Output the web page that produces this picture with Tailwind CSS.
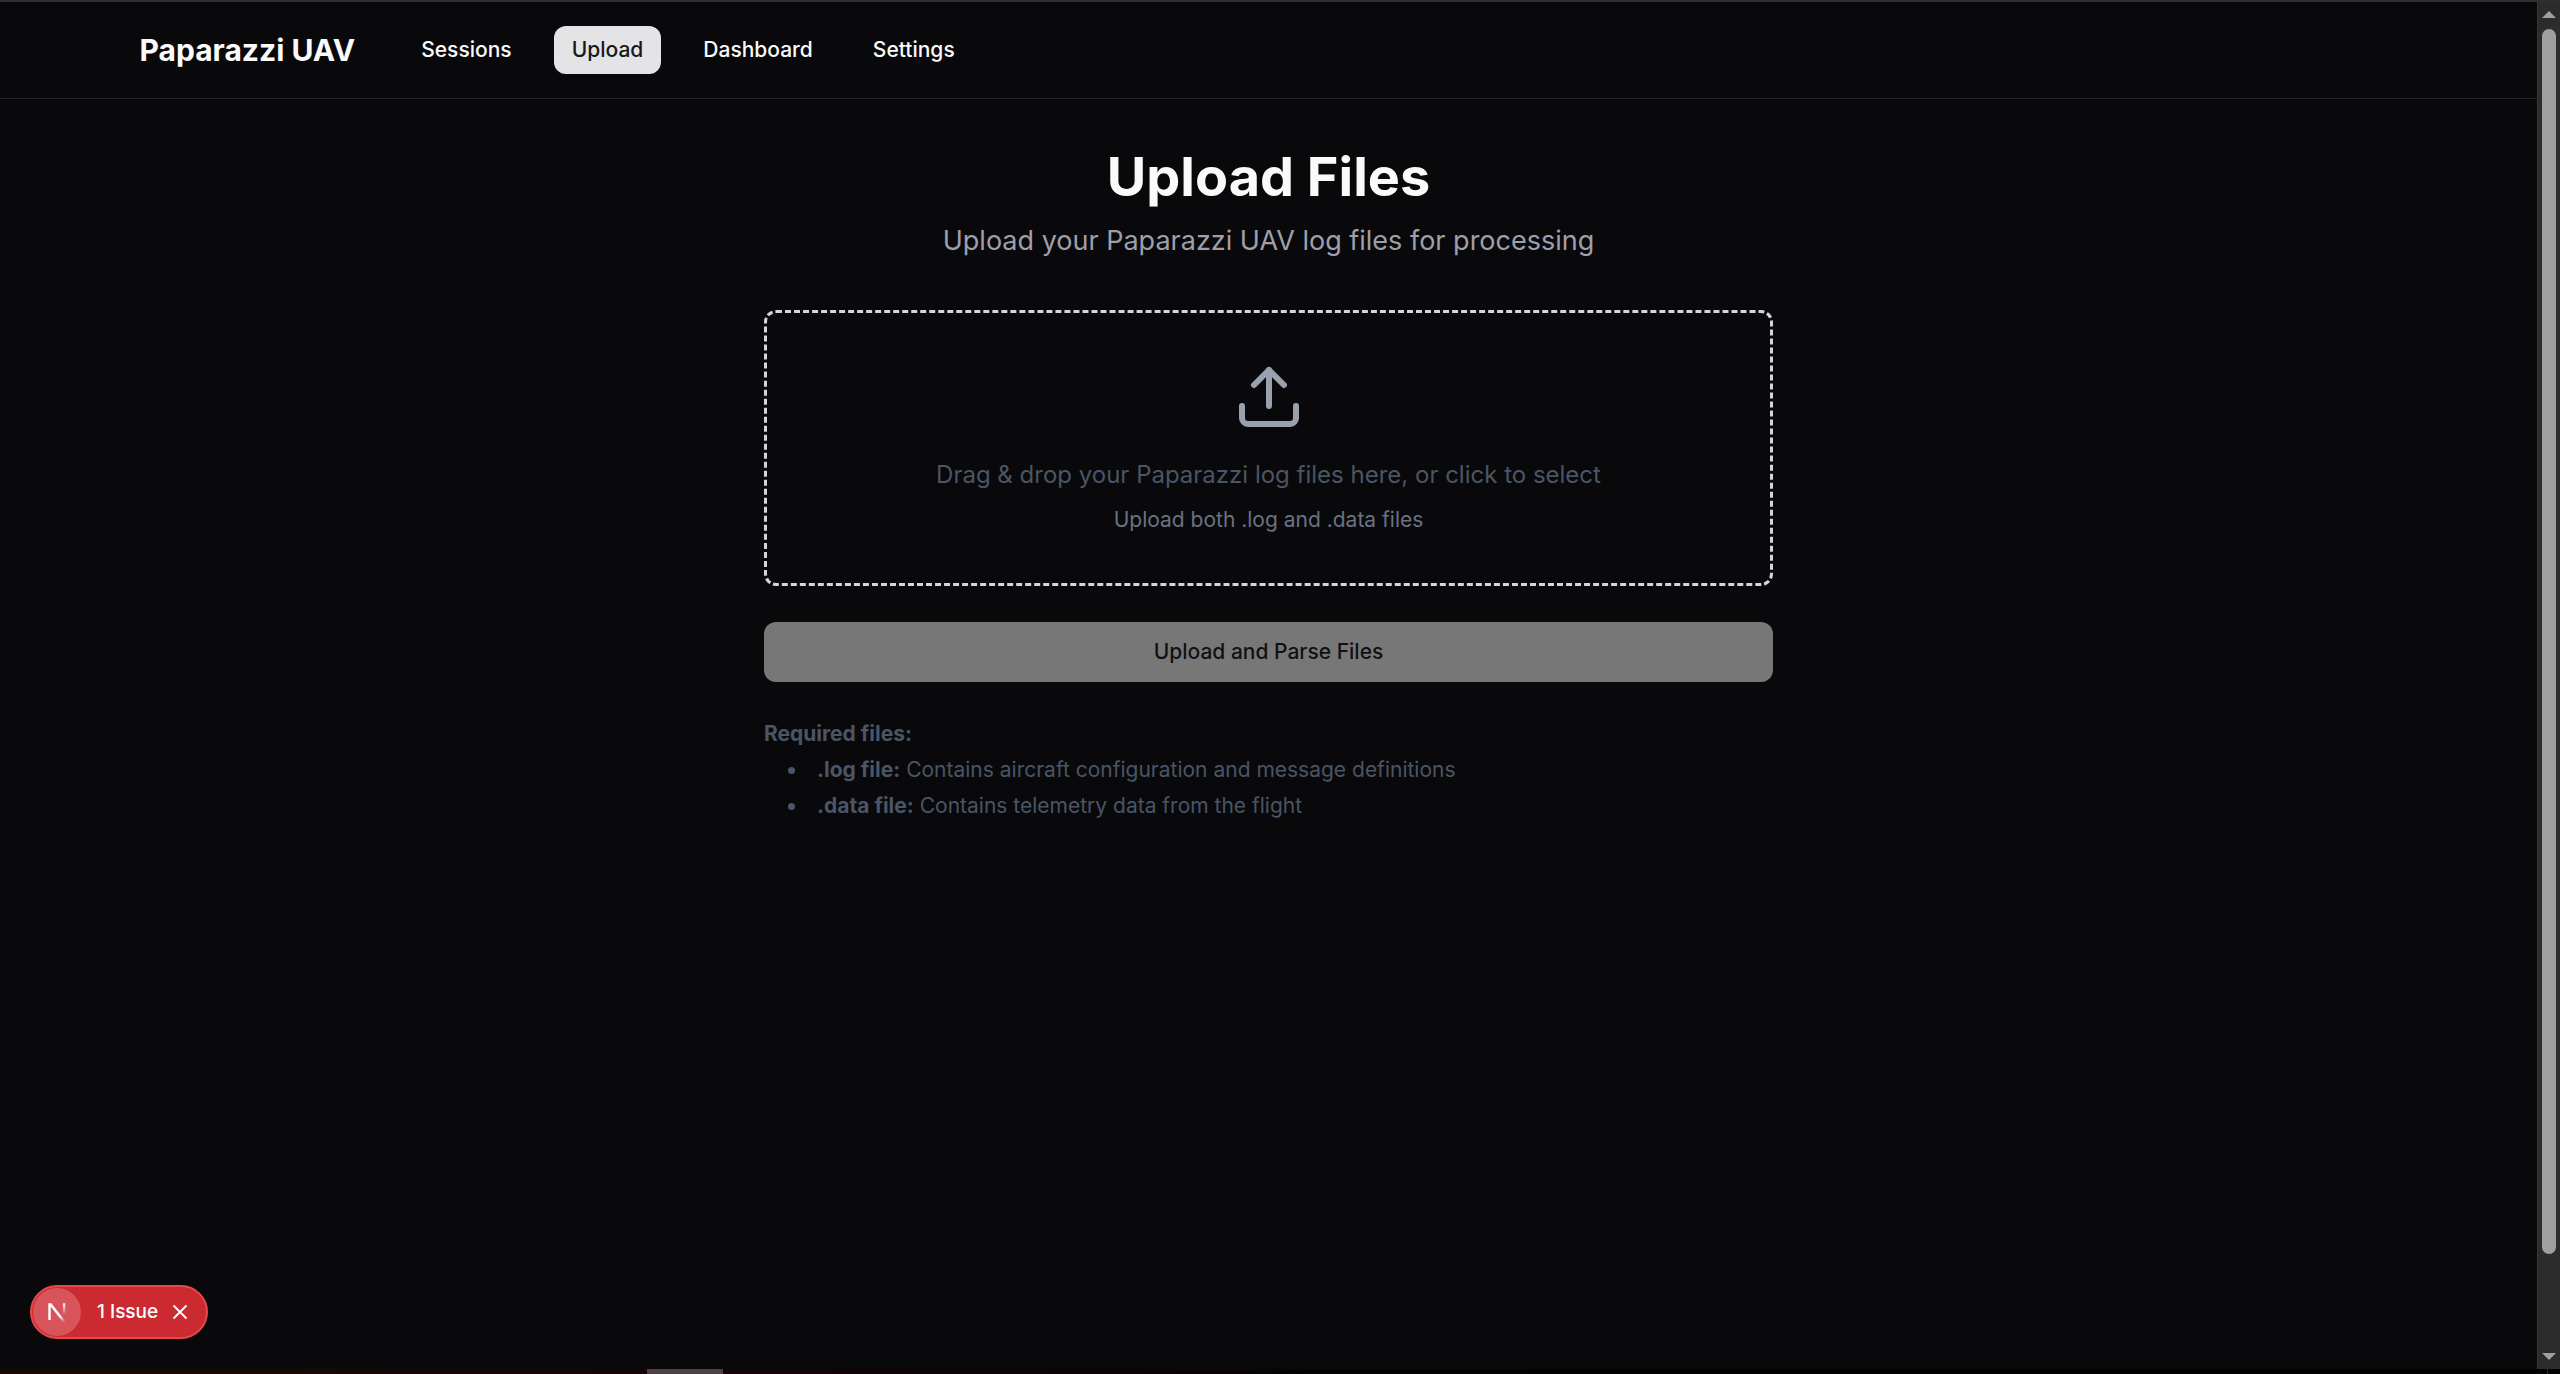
<!DOCTYPE html>
<html lang="en">
<head>
<meta charset="utf-8">
<meta name="viewport" content="width=device-width, initial-scale=1">
<title>Paparazzi UAV - Upload Files</title>
<script src="https://cdn.jsdelivr.net/npm/@tailwindcss/browser@4"></script>
</head>
<body class="flex h-screen flex-col overflow-hidden bg-[#09090b] font-['Inter',sans-serif] text-[21px] leading-[30px] text-neutral-50 antialiased">
  <div class="flex min-h-0 flex-1 border-t-2 border-[#2f2f31]">
    <div class="relative flex min-w-0 flex-1 flex-col">
      <header class="border-b border-[#27272a]">
        <div class="mx-auto flex h-24 max-w-[2304px] items-center gap-12 px-[23px]">
          <a href="#" class="text-[30px] leading-[42px] font-bold">Paparazzi UAV</a>
          <nav class="flex items-center gap-6 font-medium" aria-label="Main">
            <a href="#sessions" class="flex h-12 items-center rounded-xl px-[18px]">Sessions</a>
            <a href="#upload" aria-current="page" class="flex h-12 items-center rounded-xl bg-[#e4e4e7] px-[18px] text-[#18181b]">Upload</a>
            <a href="#dashboard" class="flex h-12 items-center rounded-xl px-[18px]">Dashboard</a>
            <a href="#settings" class="flex h-12 items-center rounded-xl px-[18px]">Settings</a>
          </nav>
        </div>
      </header>

      <main class="mx-auto w-full max-w-[1009px] pt-12">
        <div class="text-center">
          <h1 class="text-[54px] leading-[60px] font-bold">Upload Files</h1>
          <p class="mt-[13px] text-[27px] leading-[42px] text-[#9f9fa9]">Upload your Paparazzi UAV log files for processing</p>
        </div>

        <button type="button" class="mt-12 flex w-full flex-col items-center rounded-xl border-3 border-dashed border-[#d1d5dc] p-12 text-center">
          <svg class="size-[72px] text-[#99a1af]" viewBox="0 0 24 24" fill="none" stroke="currentColor" stroke-width="2" stroke-linecap="round" stroke-linejoin="round" aria-hidden="true">
            <path d="M21 15v4a2 2 0 0 1-2 2H5a2 2 0 0 1-2-2v-4"/>
            <path d="M17 8l-5-5-5 5"/>
            <path d="M12 3v12"/>
          </svg>
          <span class="mt-6 block text-[24px] leading-[36px] text-[#4a5565]">Drag &amp; drop your Paparazzi log files here, or click to select</span>
          <span class="mt-3 block text-[#6a7282]">Upload both .log and .data files</span>
        </button>

        <button type="submit" class="mt-9 flex h-[60px] w-full items-center justify-center rounded-xl bg-[#777778] font-medium text-[#111113]" disabled>Upload and Parse Files</button>

        <div class="mt-[37px] text-[#4a5565]">
          <p class="font-bold">Required files:</p>
          <ul class="mt-1.5 ml-6 list-inside list-disc space-y-1.5">
            <li><strong>.log file:</strong> Contains aircraft configuration and message definitions</li>
            <li><strong>.data file:</strong> Contains telemetry data from the flight</li>
          </ul>
        </div>
      </main>

      <div class="absolute bottom-[30px] left-[30px] flex h-[54px] items-center rounded-full border-2 border-[#e5484d] bg-[#ca2a30] pr-[18px] pl-px text-white">
        <span class="flex size-12 items-center justify-center rounded-full bg-[#d6545a]">
          <svg class="size-6" viewBox="0 0 24 24" fill="none" aria-hidden="true">
            <defs>
              <linearGradient id="diag" x1="12" y1="11" x2="20" y2="22" gradientUnits="userSpaceOnUse"><stop offset=".4" stop-color="#fff"/><stop offset="1" stop-color="#fff" stop-opacity="0"/></linearGradient>
              <linearGradient id="stem" x1="0" y1="3" x2="0" y2="15" gradientUnits="userSpaceOnUse"><stop stop-color="#fff"/><stop offset="1" stop-color="#fff" stop-opacity="0"/></linearGradient>
            </defs>
            <path d="M3.300 3.300h3L21 22l-2 1.500L5.700 6.500V20H3.300z" fill="url(#diag)"/>
            <path d="M17.900 3.300h2.400V16h-2.400z" fill="url(#stem)"/>
          </svg>
        </span>
        <button type="button" class="ml-4 text-[19px] leading-6 font-medium">1 Issue</button>
        <button type="button" class="ml-3.5" aria-label="Dismiss">
          <svg class="size-4" viewBox="0 0 16 16" fill="none" stroke="currentColor" stroke-width="1.800" aria-hidden="true"><path d="M1.500 1.500l13 13M14.500 1.500l-13 13"/></svg>
        </button>
      </div>
    </div>

    <!-- scrollbar -->
    <div class="flex w-[23px] shrink-0 flex-col items-center border-l border-[#373737] bg-[#2c2c2c] pt-[9px] pb-[9px] pr-px" aria-hidden="true">
      <svg class="h-[7px] w-3.5 shrink-0" viewBox="0 0 14 7"><path d="M7 0l7 7H0z" fill="#9f9f9f"/></svg>
      <div class="mt-[11px] w-3.5 flex-1 rounded-full bg-[#9f9f9f]"></div>
      <svg class="mt-[99px] h-[7px] w-3.5 shrink-0" viewBox="0 0 14 7"><path d="M0 0h14L7 7z" fill="#9f9f9f"/></svg>
    </div>
  </div>
  <div class="flex h-[5px] shrink-0 justify-between bg-gradient-to-r from-[#1c0702] from-10% via-[#15030a] via-30% to-[#020203] to-62% pr-3" aria-hidden="true">
    <div class="ml-[647px] w-[76px] bg-[#4d4145]"></div>
    <div class="w-px bg-[#2c2c2c]"></div>
  </div>
</body>
</html>
